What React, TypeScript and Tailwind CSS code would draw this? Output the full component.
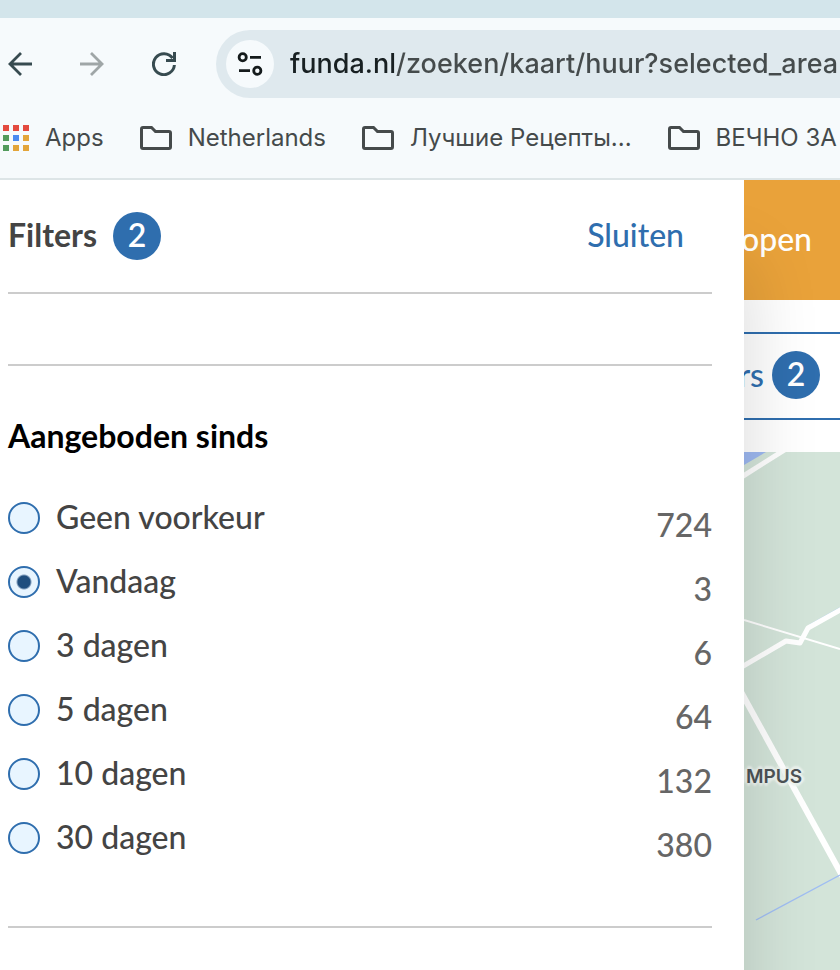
import React from "react";

const options = [
  { label: "Geen voorkeur", count: 724 },
  { label: "Vandaag", count: 3 },
  { label: "3 dagen", count: 6 },
  { label: "5 dagen", count: 64 },
  { label: "10 dagen", count: 132 },
  { label: "30 dagen", count: 380 },
];

const appTiles = [
  "bg-[#e34a3f]", "bg-[#e34a3f]", "bg-[#e34a3f]",
  "bg-[#529b5c]", "bg-[#4a8af0]", "bg-[#e3a53a]",
  "bg-[#529b5c]", "bg-[#e3a53a]", "bg-[#e3a53a]",
];

function BackIcon() {
  return (
    <svg width="24" height="24" viewBox="0 0 24 24" fill="none" stroke="currentColor" strokeWidth="2.8">
      <path d="M24 12H2M13 1L2 12L13 23" />
    </svg>
  );
}

function ForwardIcon() {
  return (
    <svg width="24" height="24" viewBox="0 0 24 24" fill="none" stroke="currentColor" strokeWidth="2.8">
      <path d="M0 12H22M11 1L22 12L11 23" />
    </svg>
  );
}

function ReloadIcon() {
  return (
    <svg width="24" height="24" viewBox="0 0 24 24" fill="none" stroke="currentColor" strokeWidth="3">
      <path d="M22.4 13A10.5 10.5 0 1 1 20.6 6.2" />
      <path d="M22.5 0V8.5H14" />
    </svg>
  );
}

function TuneIcon() {
  return (
    <svg width="26" height="24" viewBox="0 0 26 24" fill="none" stroke="#151b1c" strokeWidth="2.8">
      <circle cx="5.7" cy="5.3" r="3.6" />
      <path d="M13 5.3H24M2 18.7H13" />
      <circle cx="20.3" cy="18.7" r="3.6" />
    </svg>
  );
}

function FolderIcon() {
  return (
    <svg width="32" height="24" viewBox="0 0 32 24" fill="none" stroke="currentColor" strokeWidth="3" className="shrink-0">
      <path d="M3 1.5H11.5L15.5 5.5H29Q30.5 5.5 30.5 7V21Q30.5 22.5 29 22.5H3Q1.5 22.5 1.5 21V3Q1.5 1.5 3 1.5Z" />
    </svg>
  );
}

function Folder({ name }: { name: string }) {
  return (
    <button className="flex shrink-0 items-center gap-4 whitespace-nowrap">
      <FolderIcon />
      <span>{name}</span>
    </button>
  );
}

function Badge() {
  return (
    <span className="flex size-12 shrink-0 items-center justify-center rounded-full bg-[#2f6eae] pb-[2px] text-[32px] leading-10 font-semibold text-white">
      2
    </span>
  );
}

function Browser() {
  return (
    <header className="relative z-20 overflow-hidden border-b-2 border-[#dde5e7] bg-[#f6fafc] font-['Inter',sans-serif]">
      <div className="h-[18px] bg-[#d3e5eb]" />
      <div className="flex items-center pt-3 pl-2">
        <div className="flex shrink-0 items-center gap-12 pr-10 text-[#374b50]">
          <button aria-label="Terug"><BackIcon /></button>
          <button aria-label="Vooruit" className="text-[#9fa6a7]"><ForwardIcon /></button>
          <button aria-label="Vernieuwen"><ReloadIcon /></button>
        </div>
        <div className="flex h-[68px] min-w-0 flex-1 items-center rounded-l-full bg-[#dfe9ee] pl-[10px]">
          <button aria-label="Site-informatie" className="flex size-12 shrink-0 items-center justify-center rounded-full bg-[#f6fafc]">
            <TuneIcon />
          </button>
          <input
            aria-label="Adres"
            defaultValue="funda.nl/zoeken/kaart/huur?selected_area"
            className="ml-4 h-10 min-w-0 flex-1 bg-linear-to-r from-[#182022] from-[107px] to-[#454b4c] to-[107px] bg-clip-text text-[27px] font-medium text-transparent outline-none"
          />
        </div>
      </div>
      <nav aria-label="Bladwijzers" className="flex h-20 items-center gap-9 pl-[3px] text-[24px] leading-8 text-[#454a4b]">
        <button className="flex shrink-0 items-center gap-4">
          <span className="grid grid-cols-3 gap-1">
            {appTiles.map((tile, i) => (
              <span key={i} className={"size-[6px] " + tile} />
            ))}
          </span>
          <span>Apps</span>
        </button>
        <Folder name="Netherlands" />
        <Folder name="Лучшие Рецепты..." />
        <Folder name="ВЕЧНО ЗА" />
      </nav>
    </header>
  );
}

function FilterPanel() {
  return (
    <aside className="relative z-10 min-w-0 flex-1 bg-white pr-8 pl-2 text-[32px] leading-10 font-medium text-[#444] shadow-[8px_80px_64px_rgba(0,0,0,0.13)]">
      <div className="flex h-28 items-center justify-between pr-7">
        <div className="flex items-center gap-4">
          <h1 className="pb-[2px] font-bold">Filters</h1>
          <Badge />
        </div>
        <button className="pb-[2px] text-[#2f6eae]">Sluiten</button>
      </div>
      <div className="h-[74px] border-y-2 border-[#ccc]" />
      <fieldset className="border-b-2 border-[#ccc] pb-14">
        <legend className="pt-[50px] pb-[30px] font-bold text-black">Aangeboden sinds</legend>
        {options.map((option) => (
          <div key={option.label} className="flex h-16 items-center justify-between">
            <label className="flex items-center gap-4">
              <input
                type="radio"
                name="since"
                defaultChecked={option.label === "Vandaag"}
                className="size-8 shrink-0 appearance-none rounded-full border-2 border-[#2f6eae] bg-[#e8f5ff] checked:bg-radial checked:from-[#1f4e7e] checked:from-[6px] checked:to-[#e8f5ff] checked:to-[8px]"
              />
              <span className="pb-[2px]">{option.label}</span>
            </label>
            <span className="pt-[14px] text-[#666]">{option.count}</span>
          </div>
        ))}
      </fieldset>
    </aside>
  );
}

function MapColumn() {
  return (
    <main className="flex w-24 shrink-0 flex-col overflow-hidden bg-white text-[32px] leading-10 font-medium">
      <div className="flex h-[120px] items-center justify-end bg-[#e9a23a] pr-7 text-white">
        <button className="pb-[2px]">open</button>
      </div>
      <button className="my-8 flex h-[88px] items-center justify-end gap-2 border-y-2 border-[#2f6eae] pr-5 pb-[2px] text-[#2f6eae]">
        <span>rs</span>
        <Badge />
      </button>
      <div className="relative flex-1 bg-[#d3e4d9]">
        <svg viewBox="0 0 96 518" preserveAspectRatio="xMinYMin slice" className="absolute inset-0 size-full" fill="none">
          <path d="M0 0H22L0 13Z" fill="#9db8f0" />
          <path d="M-4 26L42 -3" stroke="#fff" strokeWidth="5" />
          <path d="M0 168L96 197" stroke="#fff" strokeWidth="2" />
          <path d="M66 173L96 156" stroke="#a9cbe8" strokeWidth="2" />
          <path d="M-4 216L42 189L56 191L64 176L100 156" stroke="#fff" strokeWidth="5" strokeLinejoin="round" />
          <path d="M-4 238L100 427" stroke="#fff" strokeWidth="6" />
          <path d="M12 468L96 423" stroke="#9fbdf3" strokeWidth="1.4" />
        </svg>
        <span className="absolute top-[313px] left-[2px] font-['Inter',sans-serif] text-[19px] leading-6 font-semibold text-[#4d5357] [text-shadow:0_0_3px_#eef4f0,0_0_3px_#eef4f0,3px_0_2px_#eef4f0,-3px_0_2px_#eef4f0,0_3px_2px_#eef4f0,0_-3px_2px_#eef4f0]">
          MPUS
        </span>
      </div>
    </main>
  );
}

export default function App() {
  return (
    <div className="flex min-h-screen flex-col overflow-hidden bg-white font-['Lato',sans-serif]">
      <Browser />
      <div className="flex flex-1">
        <FilterPanel />
        <MapColumn />
      </div>
    </div>
  );
}
